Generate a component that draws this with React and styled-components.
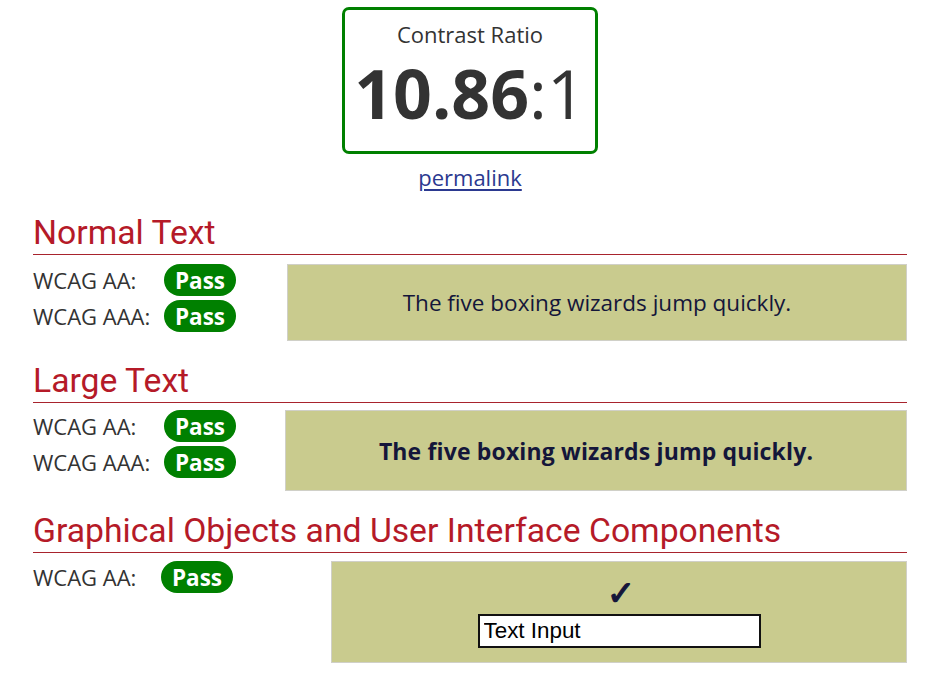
import React from 'react';
import styled, { createGlobalStyle } from 'styled-components';

const GlobalStyle = createGlobalStyle`
  html, body {
    margin: 0;
    padding: 0;
    background: #fff;
  }
  body {
    font-family: "Open Sans", "DejaVu Sans", sans-serif;
    color: #333;
  }
`;

const Page = styled.main`
  width: 874px;
  padding: 7px 26px 20px 33px;
`;

const Top = styled.div`
  display: flex;
  flex-direction: column;
  align-items: center;
`;

const RatioBox = styled.div`
  width: 250px;
  border: 3px solid #008000;
  border-radius: 7px;
  display: flex;
  flex-direction: column;
  align-items: center;
  padding-top: 9px;
  box-sizing: content-box;
  height: 132px;
`;

const RatioLabel = styled.div`
  font-size: 22px;
  line-height: 30px;
  color: #333;
`;

const RatioValue = styled.div`
  font-size: 68px;
  line-height: 88px;
  color: #333;

  strong {
    font-weight: 700;
  }
`;

const Permalink = styled.a`
  margin-top: 8px;
  font-size: 22px;
  line-height: 30px;
  color: #2b3990;
  text-decoration: underline;
  text-underline-offset: 3px;
`;

const Section = styled.section`
  margin-top: ${p => p.$top}px;
`;

const Heading = styled.h2`
  margin: 0;
  font-family: Roboto, "Liberation Sans", sans-serif;
  font-weight: 400;
  font-size: 33.7px;
  line-height: 40px;
  color: #b51a28;
  border-bottom: 1px solid #a8232d;
  padding-bottom: 1px;
`;

const Body = styled.div`
  display: flex;
  align-items: flex-start;
  margin-top: ${p => p.$gap}px;
`;

const Results = styled.div`
  width: ${p => p.$width}px;
  flex-shrink: 0;
  display: flex;
  flex-direction: column;
  gap: 4px;
`;

const Row = styled.div`
  display: flex;
  align-items: center;
  height: 32px;
`;

const Label = styled.span`
  width: ${p => p.$width}px;
  font-size: 22px;
  color: #333;
`;

const Badge = styled.span`
  display: inline-flex;
  align-items: center;
  justify-content: center;
  width: 72px;
  height: 32px;
  border-radius: 16px;
  background: #008000;
  color: #fff;
  font-weight: 700;
  font-size: 22.5px;
`;

const Sample = styled.div`
  flex: 1;
  height: ${p => p.$height}px;
  box-sizing: border-box;
  background: #c9cb8e;
  border: 1px solid #d0d0c8;
  display: flex;
  flex-direction: column;
  align-items: center;
  justify-content: ${p => (p.$stack ? 'flex-start' : 'center')};
  padding-top: ${p => (p.$stack ? 14 : 0)}px;
  color: #14163a;
`;

const NormalSample = styled.p`
  margin: 0;
  font-size: 22.5px;
`;

const LargeSample = styled.p`
  margin: 0;
  font-size: 23px;
  font-weight: 700;
  letter-spacing: 0.15px;
`;

const Check = styled.span`
  font-family: "DejaVu Sans", sans-serif;
  font-size: 34px;
  line-height: 34px;
  -webkit-text-stroke: 1.2px #14163a;
  margin-left: 4px;
  margin-bottom: 4px;
`;

const TextInput = styled.input`
  width: 283px;
  height: 34px;
  box-sizing: border-box;
  border: 2px solid #111;
  background: #fff;
  font-family: "Liberation Sans", Arial, sans-serif;
  font-size: 22.4px;
  color: #000;
  padding: 0 4px;
  outline: none;
`;

const ResultRow = ({ label, width = 131 }) => (
  <Row>
    <Label $width={width}>{label}</Label>
    <Badge>Pass</Badge>
  </Row>
);

export default function App() {
  return (
    <>
      <GlobalStyle />
      <Page>
        <Top>
          <RatioBox>
            <RatioLabel>Contrast Ratio</RatioLabel>
            <RatioValue><strong>10.86</strong>:1</RatioValue>
          </RatioBox>
          <Permalink href="#">permalink</Permalink>
        </Top>

        <Section $top={21}>
          <Heading>Normal Text</Heading>
          <Body $gap={9}>
            <Results $width={254}>
              <ResultRow label="WCAG AA:" />
              <ResultRow label="WCAG AAA:" />
            </Results>
            <Sample $height={77}>
              <NormalSample>The five boxing wizards jump quickly.</NormalSample>
            </Sample>
          </Body>
        </Section>

        <Section $top={20}>
          <Heading>Large Text</Heading>
          <Body $gap={7}>
            <Results $width={252}>
              <ResultRow label="WCAG AA:" />
              <ResultRow label="WCAG AAA:" />
            </Results>
            <Sample $height={81}>
              <LargeSample>The five boxing wizards jump quickly.</LargeSample>
            </Sample>
          </Body>
        </Section>

        <Section $top={20}>
          <Heading>Graphical Objects and User Interface Components</Heading>
          <Body $gap={8}>
            <Results $width={298}>
              <ResultRow label="WCAG AA:" width={128} />
            </Results>
            <Sample $height={102} $stack>
              <Check>✓</Check>
              <TextInput defaultValue="Text Input" readOnly />
            </Sample>
          </Body>
        </Section>
      </Page>
    </>
  );
}
